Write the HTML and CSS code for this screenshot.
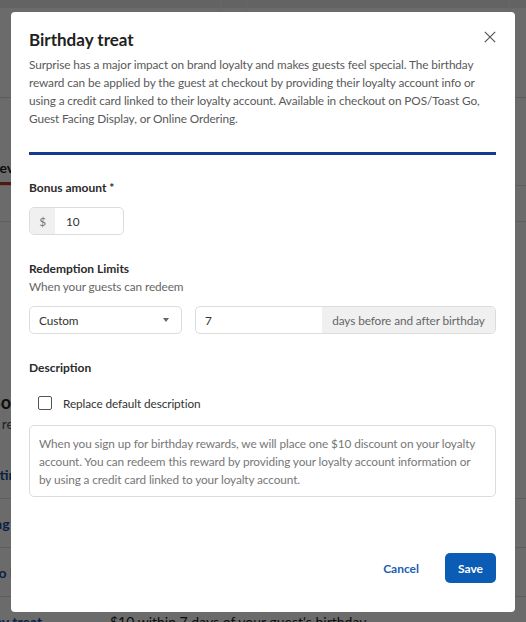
FILE: index.html
```html
<!DOCTYPE html>
<html lang="en">
<head>
<meta charset="utf-8">
<title>Birthday treat</title>
<link rel="stylesheet" href="styles.css">
</head>
<body>
<div class="page">
  <div class="page-top">
    <div class="top-card"></div>
    <div class="top-card wide"></div>
  </div>
  <div class="page-header"></div>
  <div class="tabs">
    <span class="tab active">Reviews</span>
    <span class="tab">Settings</span>
  </div>
  <div class="page-gap"></div>
  <div class="section">
    <div class="section-title">Booking rewards</div>
    <div class="section-sub">Manage rewards and offers</div>
  </div>
  <div class="row first"><span class="row-link r1">Settings</span></div>
  <div class="row"><span class="row-link r2">Spending options</span></div>
  <div class="row"><span class="row-link r3">Auto bonus</span></div>
  <div class="row"><span class="row-link r4">Birthday treat</span><span class="row-value">$10 within 7 days of your guest's birthday</span></div>
</div>

<div class="backdrop"></div>

<div class="modal" role="dialog" aria-labelledby="modal-title">
  <div class="modal-head">
    <h1 id="modal-title" class="modal-title">Birthday treat</h1>
    <button class="close" aria-label="Close">
      <svg width="12" height="12" viewBox="0 0 12 12"><path d="M0.8 0.8 L11.2 11.2 M11.2 0.8 L0.8 11.2" stroke="#555" stroke-width="1.2" fill="none"/></svg>
    </button>
  </div>
  <p class="intro">Surprise has a major impact on brand loyalty and makes guests feel special. The birthday reward can be applied by the guest at checkout by providing their loyalty account info or using a credit card linked to their loyalty account. Available in checkout on POS/Toast Go, Guest Facing Display, or Online Ordering.</p>
  <div class="rule"></div>

  <div class="field bonus">
    <div class="label">Bonus amount *</div>
    <div class="money">
      <span class="prefix">$</span>
      <span class="money-value">10</span>
    </div>
  </div>

  <div class="field limits">
    <div class="label">Redemption Limits</div>
    <div class="hint">When your guests can redeem</div>
    <div class="limit-row">
      <div class="select">
        <span>Custom</span>
        <svg class="caret" width="6" height="4" viewBox="0 0 6 4"><path d="M0 0 H6 L3 4 Z" fill="#666"/></svg>
      </div>
      <div class="days">
        <span class="days-value">7</span>
        <span class="suffix">days before and after birthday</span>
      </div>
    </div>
  </div>

  <div class="field desc">
    <div class="label">Description</div>
    <label class="check-row">
      <span class="checkbox"></span>
      <span>Replace default description</span>
    </label>
    <div class="textarea">When you sign up for birthday rewards, we will place one $10 discount on your loyalty account. You can redeem this reward by providing your loyalty account information or by using a credit card linked to your loyalty account.</div>
  </div>

  <div class="modal-foot">
    <button class="btn-link">Cancel</button>
    <button class="btn-primary">Save</button>
  </div>
</div>
</body>
</html>
```

FILE: styles.css
```css
html, body {
  margin: 0;
  padding: 0;
}
body {
  width: 526px;
  height: 622px;
  overflow: hidden;
  background: #ffffff;
  font-family: "Lato", "Noto Sans", sans-serif;
  color: #252525;
}

/* ---------- background page ---------- */
.page {
  width: 526px;
}
.page-top {
  height: 8px;
  background: #ececec;
  display: flex;
  gap: 25px;
}
.top-card {
  width: 220px;
  height: 12px;
  border-right: 1px solid #f6f6f6;
}
.top-card.wide {
  width: 262px;
  border-left: 1px solid #f6f6f6;
}
.page-header {
  height: 89px;
  border-bottom: 1px solid #dcdcdc;
}
.tabs {
  height: 87px;
  display: flex;
  align-items: flex-end;
  gap: 30px;
  margin-left: -12px;
  border-bottom: 1px solid #e2e2e2;
}
.tab {
  font-weight: 700;
  font-size: 14px;
  line-height: 17px;
  padding: 0 3px 6px;
  border-bottom: 3px solid transparent;
  color: #222;
}
.tab.active {
  border-bottom-color: #c0392b;
}
.page-gap {
  height: 35px;
  border-bottom: 1px solid #e2e2e2;
}
.section {
  padding: 169px 0 17px 0;
  margin-left: -11px;
}
.section-title {
  font-weight: 700;
  font-size: 18px;
  line-height: 22px;
}
.section-sub {
  font-size: 14px;
  line-height: 17px;
  color: #555;
  margin-top: 2px;
  margin-left: -40px;
}
.row {
  height: 48px;
  display: flex;
  align-items: center;
  border-top: 1px solid #dedede;
}
.row.first {
  border-top-color: transparent;
}
.row-link {
  font-weight: 700;
  font-size: 14px;
  color: #1a4fa0;
  white-space: nowrap;
}
.r1 { margin-left: -20px; }
.r2 { margin-left: -48px; }
.r3 { margin-left: -24px; }
.r4 { margin-left: -44px; width: 154px; }
.row-value {
  font-size: 14px;
  color: #222;
}

.backdrop {
  position: fixed;
  inset: 0;
  background: rgba(0, 0, 0, 0.58);
}

/* ---------- modal ---------- */
.modal {
  position: fixed;
  left: 11px;
  top: 12px;
  width: 504px;
  height: 600px;
  box-sizing: border-box;
  background: #fff;
  border-radius: 4px;
  padding: 16px 19px 29px 18px;
  display: flex;
  flex-direction: column;
  font-size: 11.8px;
  letter-spacing: -0.1px;
}
.modal-head {
  display: flex;
  justify-content: space-between;
  align-items: flex-start;
}
.modal-title {
  margin: 0;
  font-size: 17px;
  line-height: 24px;
  font-weight: 700;
  letter-spacing: 0;
  color: #222;
}
.close {
  border: 0;
  background: none;
  padding: 0;
  margin: 2px -1px 0 0;
  width: 14px;
  height: 14px;
  display: flex;
  align-items: center;
  justify-content: center;
}
.intro {
  margin: 4px 0 0;
  line-height: 18px;
  color: #595959;
}
.rule {
  height: 3px;
  background: #153b8e;
  margin-top: 24px;
}
.label {
  font-size: 12px;
  font-weight: 700;
  line-height: 18px;
  letter-spacing: 0;
  color: #2b2b2b;
}
.hint {
  line-height: 18px;
  color: #666;
}
.field.bonus {
  margin-top: 24px;
}
.money {
  margin-top: 10px;
  width: 95px;
  height: 28px;
  box-sizing: border-box;
  border: 1px solid #dcdcdc;
  border-radius: 5px;
  display: flex;
  overflow: hidden;
}
.prefix {
  width: 25px;
  background: #f0f0f0;
  color: #777;
  display: flex;
  align-items: center;
  justify-content: center;
}
.money-value {
  padding-left: 11px;
  display: flex;
  align-items: center;
  color: #333;
}
.field.limits {
  margin-top: 25px;
}
.limit-row {
  margin-top: 10px;
  display: flex;
  gap: 13px;
}
.select {
  width: 153px;
  height: 28px;
  box-sizing: border-box;
  border: 1px solid #dcdcdc;
  border-radius: 5px;
  padding: 0 12px 0 9px;
  display: flex;
  align-items: center;
  justify-content: space-between;
  color: #333;
}
.days {
  flex: 1;
  height: 28px;
  box-sizing: border-box;
  border: 1px solid #dcdcdc;
  border-radius: 5px;
  display: flex;
  overflow: hidden;
}
.days-value {
  flex: 1;
  padding-left: 9px;
  display: flex;
  align-items: center;
  color: #333;
}
.suffix {
  width: 173px;
  box-sizing: border-box;
  background: #f0f0f0;
  color: #666;
  display: flex;
  align-items: center;
  justify-content: center;
}
.field.desc {
  margin-top: 25px;
}
.check-row {
  margin-top: 16px;
  height: 20px;
  display: flex;
  align-items: center;
  gap: 11px;
  padding-left: 9px;
  color: #333;
}
.checkbox {
  width: 14px;
  height: 14px;
  border: 1px solid #555;
  border-radius: 2px;
  box-sizing: border-box;
}
.textarea {
  margin-top: 12px;
  height: 72px;
  box-sizing: border-box;
  border: 1px solid #dcdcdc;
  border-radius: 5px;
  padding: 9px 15px 9px 9px;
  line-height: 18px;
  color: #777;
}
.modal-foot {
  margin-top: auto;
  display: flex;
  justify-content: flex-end;
  align-items: center;
  gap: 24px;
}
.btn-link {
  border: 0;
  background: none;
  font-family: inherit;
  font-size: 12px;
  font-weight: 700;
  color: #1a5fb4;
  padding: 0 2px;
}
.btn-primary {
  border: 0;
  background: #0b5cb5;
  color: #fff;
  font-family: inherit;
  font-size: 12px;
  font-weight: 700;
  height: 30px;
  width: 51px;
  border-radius: 5px;
}
```
